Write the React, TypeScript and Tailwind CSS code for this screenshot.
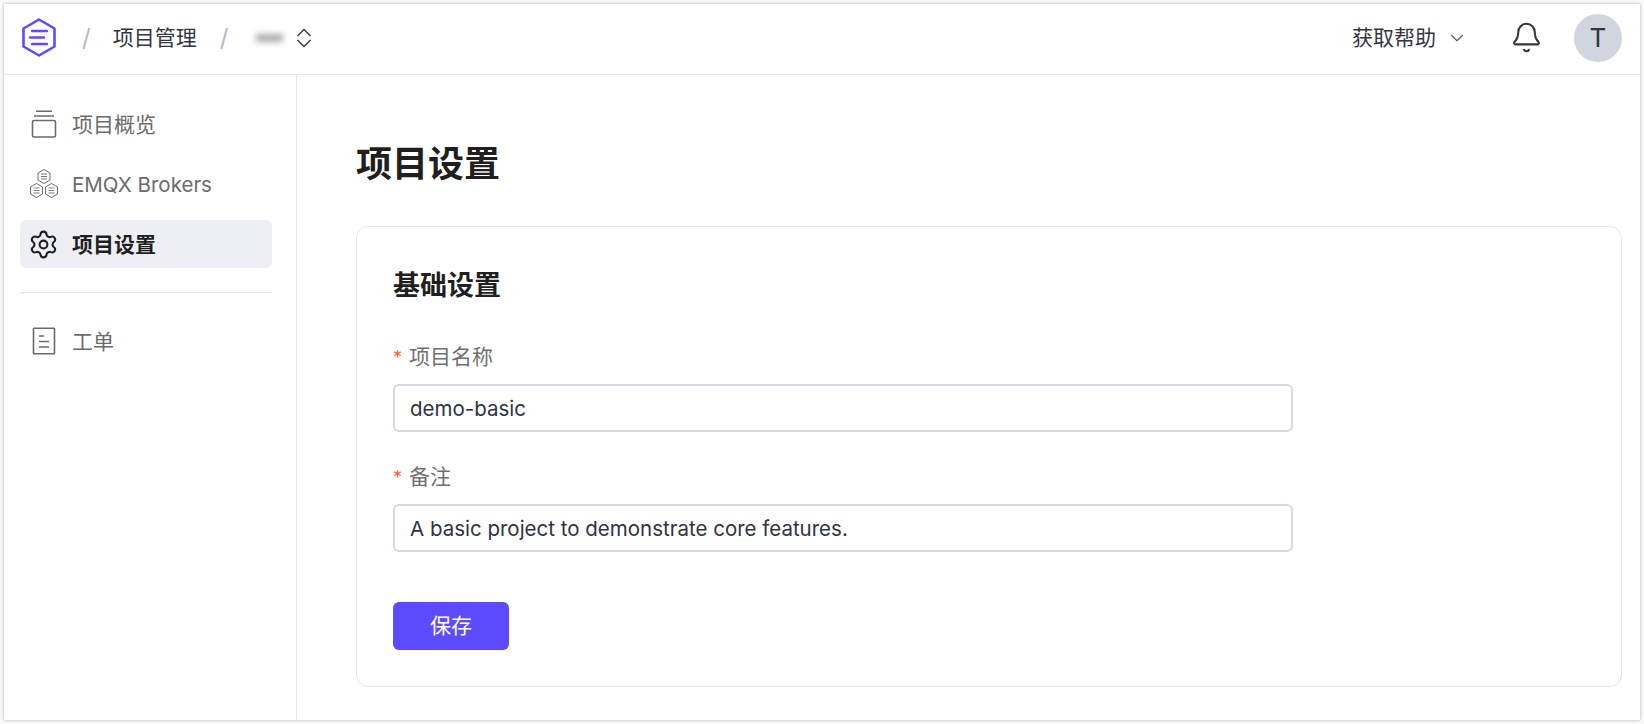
import { Bell, ChevronDown, Settings } from "lucide-react";

function Logo() {
  return (
    <svg width="34" height="39" viewBox="0 0 34 39" fill="none" stroke="#5d4cff" strokeLinecap="round">
      <path d="M17 1.5 32.5 10.5v18L17 37.5 1.5 28.5v-18z" strokeWidth="2.6" strokeLinejoin="round" />
      <path d="M10 13h15M8 19.5h14M10 26h15" strokeWidth="2.4" />
    </svg>
  );
}

function StackIcon() {
  return (
    <svg width="26" height="28" viewBox="0 0 26 28" fill="none" stroke="#6b6b6b" strokeWidth="1.6">
      <path d="M5 1.2h16M3 6h20" />
      <rect x="1.5" y="10.5" width="23" height="16.5" rx="1.5" />
    </svg>
  );
}

function Hex({ x, y }: { x: number; y: number }) {
  return (
    <g transform={`translate(${x} ${y})`}>
      <path d="M7 0.5 13 4v7l-6 3.5L1 11V4z" />
      <path d="M4 5h6M4 7.5h6M4 10h6" strokeWidth="0.9" />
    </g>
  );
}

function HexClusterIcon() {
  return (
    <svg width="30" height="30" viewBox="0 0 30 30" fill="none" stroke="#6b6b6b" strokeWidth="1">
      <Hex x={8} y={0} />
      <Hex x={0.5} y={14} />
      <Hex x={15.5} y={14} />
    </svg>
  );
}

function TicketIcon() {
  return (
    <svg width="24" height="28" viewBox="0 0 24 28" fill="none" stroke="#6b6b6b" strokeWidth="1.6">
      <rect x="1.5" y="1.2" width="21" height="25.6" rx="0.5" />
      <path d="M7 9h5M7 14.5h10M7 20h10" />
    </svg>
  );
}

function UpDownIcon() {
  return (
    <svg width="16" height="20" viewBox="0 0 16 20" fill="none" stroke="#33363f" strokeWidth="1.4">
      <path d="M1.5 8 8 1.5 14.5 8M1.5 12 8 18.5 14.5 12" />
    </svg>
  );
}

function NavItem({ icon, label, active }: { icon: React.ReactNode; label: React.ReactNode; active?: boolean }) {
  return (
    <div
      className={
        active
          ? "flex h-12 items-center gap-[5px] rounded-md bg-[#eeeff5] font-semibold text-[#1f1f1f]"
          : "flex h-12 items-center gap-[5px] rounded-md text-[#6b6b6b]"
      }
    >
      <span className="flex w-[47px] shrink-0 items-center justify-center">{icon}</span>
      <span className="pt-[1px]">{label}</span>
    </div>
  );
}

function Field({ label, value }: { label: string; value: string }) {
  return (
    <div className="flex flex-col gap-[13px]">
      <label className="flex h-7 items-center text-[#707070]">
        <span className="w-[16px] text-[18px] text-[#f2623a]">*</span>
        {label}
      </label>
      <input
        readOnly
        value={value}
        className="h-12 w-[900px] rounded-md border-2 border-[#d5d8e3] bg-white px-[15px] text-[20.5px] text-[#2f3342] outline-none"
      />
    </div>
  );
}

export default function App() {
  return (
    <div className="h-screen w-full bg-[#f9f9f9] p-[4px] font-['Inter','Noto_Sans_CJK_SC',sans-serif] text-[21px]">
      <div className="flex h-full flex-col bg-white shadow-[0_0_3px_rgba(0,0,0,0.3)]">
        <header className="flex h-[71px] shrink-0 items-center border-b border-[#e4e5e9] pr-[18px] pb-[3px] pl-[18px] text-[#33363f]">
          <Logo />
          <span className="ml-[26px] text-[24px] text-[#b4b8c8]">/</span>
          <span className="ml-[22px]">项目管理</span>
          <span className="ml-[23px] text-[24px] text-[#b4b8c8]">/</span>
          <div className="ml-[28px] h-[8px] w-[27px] bg-[#aaaaaa] blur-[3px]" />
          <span className="ml-[13px]">
            <UpDownIcon />
          </span>
          <div className="ml-auto flex items-center">
            <span>获取帮助</span>
            <ChevronDown className="ml-[10px] h-[22px] w-[22px] text-[#555a66]" strokeWidth={1.2} />
            <Bell className="ml-[42px] h-[33px] w-[33px] text-[#33363f]" strokeWidth={1.5} />
            <div className="ml-[31px] flex h-12 w-12 items-center justify-center rounded-full bg-[#d1d5e0] text-[26px]">
              T
            </div>
          </div>
        </header>

        <div className="flex min-h-0 flex-1">
          <aside className="w-[293px] shrink-0 border-r border-[#e4e5e9] pt-[25px] pr-6 pl-4">
            <div className="flex flex-col gap-3">
              <NavItem icon={<StackIcon />} label="项目概览" />
              <NavItem icon={<HexClusterIcon />} label={<span className="text-[20.5px]">EMQX Brokers</span>} />
              <NavItem icon={<Settings size={31} strokeWidth={1.6} />} label="项目设置" active />
            </div>
            <div className="mt-6 mb-[24px] h-px bg-[#e4e5e9]" />
            <NavItem icon={<TicketIcon />} label="工单" />
          </aside>

          <main className="min-w-0 flex-1 pt-[63px] pr-[18px] pl-[59px]">
            <h1 className="text-[36px] leading-[52px] font-bold text-[#1f1f1f]">项目设置</h1>
            <section className="mt-[36px] h-[461px] rounded-xl border border-[#e4e5e9] px-9 pt-[40px]">
              <h2 className="text-[27px] leading-[38px] font-semibold text-[#1f1f1f]">基础设置</h2>
              <div className="mt-[38px] flex flex-col gap-[31px]">
                <Field label="项目名称" value="demo-basic" />
                <Field label="备注" value="A basic project to demonstrate core features." />
              </div>
              <button className="mt-[50px] h-12 w-[116px] rounded-md bg-[#5d4cff] text-white">保存</button>
            </section>
          </main>
        </div>
      </div>
    </div>
  );
}
